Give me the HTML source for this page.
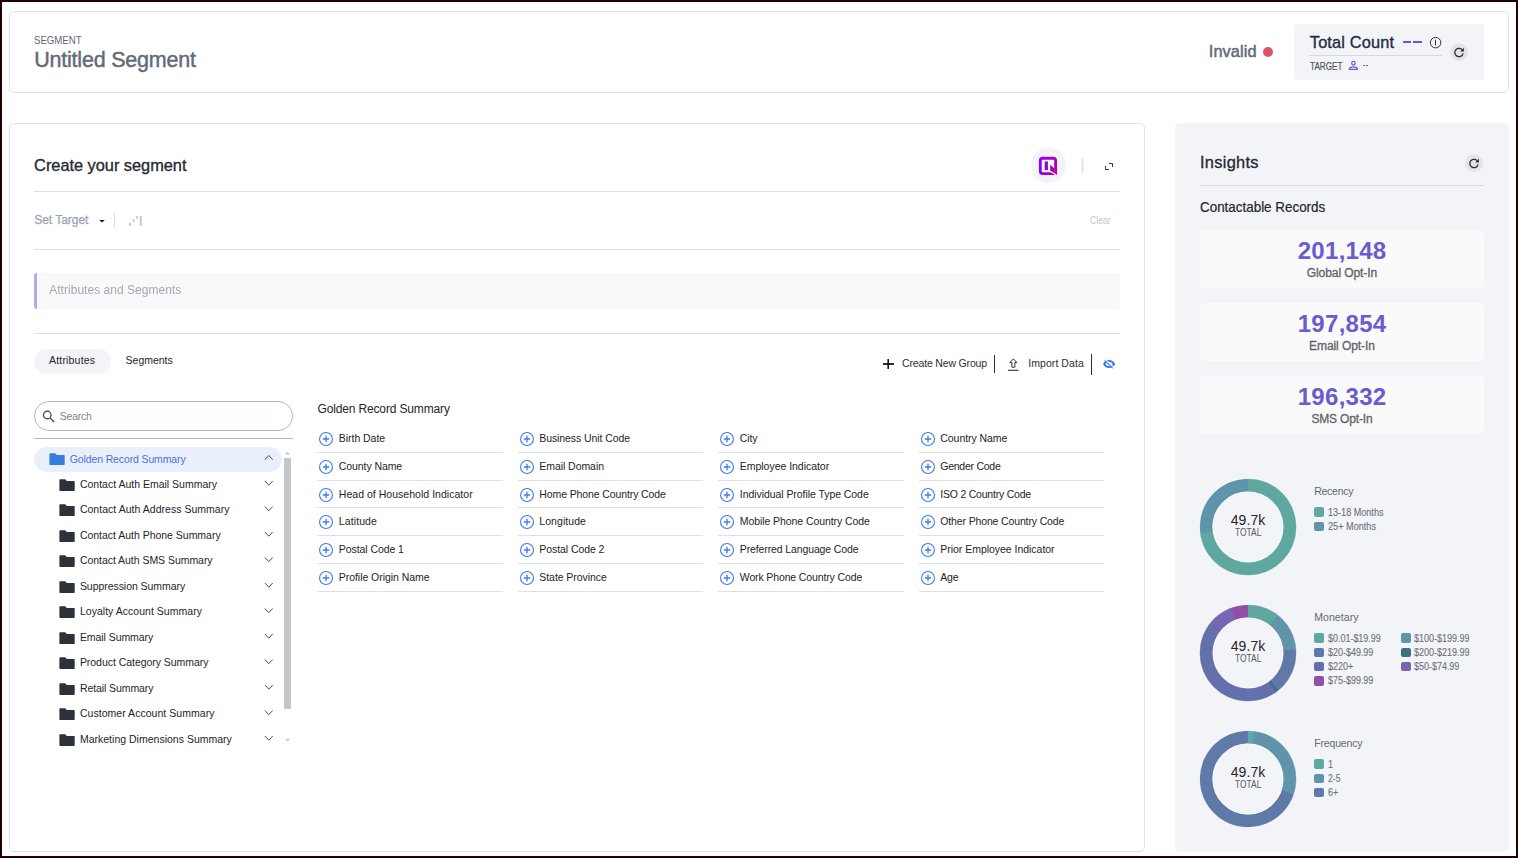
<!DOCTYPE html>
<html lang="en">
<head>
<meta charset="utf-8">
<title>Untitled Segment</title>
<style>
*{box-sizing:content-box;margin:0;padding:0}
html,body{width:1518px;height:858px;overflow:hidden;background:#fff}
body{font-family:"Liberation Sans",sans-serif;font-size:12px;color:#1f2329;-webkit-font-smoothing:antialiased}
.frame{position:absolute;left:0;top:0;width:1514px;height:854px;border:2px solid #220000;background:#fff;overflow:hidden}
.card{position:absolute;border:1px solid #dfe3e9;border-radius:5px;background:#fff}
.ins{position:absolute;border-radius:5px;background:#f3f4f8}
.t{position:absolute;display:block;white-space:nowrap;font-weight:400;font-style:normal;z-index:2;transform-origin:0 50%}
.ph{opacity:.999;will-change:opacity}
.ic{position:absolute;display:block;overflow:visible;z-index:2}
.ic svg{display:block}
.hr{position:absolute;height:1px;background:#dbdfe6}
.vr{position:absolute}
.dot{position:absolute;width:10px;height:10px;border-radius:50%;background:#dd5469}
.dash{position:absolute;background:#6a5ad6}
.count{position:absolute;border-radius:4px;background:#f3f4f8}
.logo{position:absolute;display:block;width:35px;height:35px}
.logo svg{display:block}
.drop{position:absolute;border-left:3px solid #b2a9ef;border-radius:3px;background:#f8f9fb}
.pill{position:absolute;border-radius:13px;background:#f3f4f8}
.pill.sel{background:#e9f0fc}
.search{position:absolute;border:1px solid #b1b8c0;border-radius:15px;background:#fff}
.stat{position:absolute;border-radius:5px;background:#fafafb}
.donut{position:absolute;display:block}
.sw{position:absolute;width:10px;height:9.6px;border-radius:2px}
</style>
</head>
<body>
<div class="frame">
<header class="card top" style="left:7px;top:9px;width:1498px;height:80px">
<span class="t eyebrow" style="left:24.2px;top:22px;font-size:10.8px;line-height:13px;color:#5f6877;transform:scaleX(0.892);">SEGMENT</span>
<h1 class="t" style="left:24.2px;top:36px;font-size:21.5px;line-height:25px;color:#636b78;letter-spacing:-0.21px;-webkit-text-stroke:0.43px currentColor;">Untitled Segment</h1>
<span class="t" style="left:1198.8px;top:29px;font-size:16.38px;line-height:20px;color:#636b78;letter-spacing:0.07px;-webkit-text-stroke:0.5px currentColor;">Invalid</span>
<i class="dot" style="left:1253px;top:35px"></i>
<div class="count" style="left:1284px;top:12px;width:190px;height:56px">
<h3 class="t" style="left:15.8px;top:8px;font-size:16.38px;line-height:20px;color:#222c3e;letter-spacing:0.15px;-webkit-text-stroke:0.33px currentColor;">Total Count</h3>
<span class="t" style="left:16px;top:38px;font-size:10px;line-height:10px;color:#50555d;transform:scaleX(0.816);-webkit-text-stroke:0.2px currentColor;">TARGET</span>
<i class="dash" style="left:108.9px;top:16.6px;width:8.6px;height:2.2px"></i><i class="dash" style="left:119.4px;top:16.6px;width:8.6px;height:2.2px"></i>
<svg class="ic" style="left:135px;top:12px" width="13" height="13" viewBox="-0.5 -0.65 13 13" fill="none" stroke="#2c3038"><circle cx="6.100" cy="6" r="5.250" stroke-width="1" fill="#f8f9fb"/><path d="M6 3v5.800" stroke-width="1"/></svg>
<i class="hr" style="left:15px;top:31px;width:133px;background:#d6d9df"></i>
<svg class="ic" style="left:54px;top:36px" width="11" height="11" viewBox="-0.3 -0.3 11 11" fill="none" stroke="#6f5cd8" stroke-width="1.25"><circle cx="5.1" cy="2.85" r="1.75"/><path d="M1 9.100c0-1.900 2.200-2.500 4.100-2.500s4.100.600 4.100 2.500z" stroke-linejoin="round"/></svg>
<i class="dash" style="left:69.1px;top:41px;width:2.2px;height:1.1px"></i><i class="dash" style="left:71.9px;top:41px;width:2.2px;height:1.1px"></i>
<span class="ic" style="left:156px;top:19px"><svg width="18" height="18" viewBox="0 0 18 18"><circle cx="9" cy="9" r="8.950" fill="#e2e4e8"/><path d="M12.700 7.500A4.200 4.200 0 1 0 13.100 10.400" fill="none" stroke="#2c3038" stroke-width="1.300"/><path d="M13.900 4.700v3.700H10.200z" fill="#2c3038"/></svg></span>
</div>
</header>
<main class="card main" style="left:7px;top:121px;width:1134px;height:727px">
<h3 class="t" style="left:24.1px;top:31px;font-size:16.38px;line-height:20px;color:#252a33;letter-spacing:-0.02px;-webkit-text-stroke:0.33px currentColor;">Create your segment</h3>
<span class="t" style="left:24.2px;top:89px;font-size:12px;line-height:14px;color:#9aa4b2;letter-spacing:-0.03px;-webkit-text-stroke:0.25px currentColor;">Set Target</span>
<span class="t" style="left:1080.3px;top:92px;font-size:10px;line-height:10px;color:#c3c6cb;transform:scaleX(0.862);">Clear</span>
<span class="t ph" style="left:39.2px;top:159px;font-size:12px;line-height:14px;color:#a6a9ae;letter-spacing:0.03px;">Attributes and Segments</span>
<span class="t" style="left:39.1px;top:230px;font-size:10.5px;line-height:13px;color:#1f2329;letter-spacing:0.17px;">Attributes</span>
<span class="t" style="left:115.6px;top:230px;font-size:10.5px;line-height:13px;color:#1f2329;letter-spacing:-0.02px;">Segments</span>
<span class="t" style="left:892.1px;top:233px;font-size:10.5px;line-height:13px;color:#2b2f36;letter-spacing:-0.17px;">Create New Group</span>
<span class="t" style="left:1018.2px;top:233px;font-size:10.5px;line-height:13px;color:#2b2f36;letter-spacing:0.07px;">Import Data</span>
<span class="t" style="left:49.7px;top:286px;font-size:10.5px;line-height:13px;color:#80858c;letter-spacing:-0.2px;">Search</span>
<span class="t" style="left:59.8px;top:329px;font-size:10.5px;line-height:13px;color:#4a70dc;letter-spacing:-0.13px;">Golden Record Summary</span>
<span class="t" style="left:69.9px;top:354px;font-size:10.5px;line-height:13px;color:#1f2329;">Contact Auth Email Summary</span>
<span class="t" style="left:69.9px;top:379px;font-size:10.5px;line-height:13px;color:#1f2329;letter-spacing:0.03px;">Contact Auth Address Summary</span>
<span class="t" style="left:69.9px;top:405px;font-size:10.5px;line-height:13px;color:#1f2329;letter-spacing:-0.02px;">Contact Auth Phone Summary</span>
<span class="t" style="left:69.9px;top:430px;font-size:10.5px;line-height:13px;color:#1f2329;letter-spacing:-0.04px;">Contact Auth SMS Summary</span>
<span class="t" style="left:69.9px;top:456px;font-size:10.5px;line-height:13px;color:#1f2329;letter-spacing:-0.05px;">Suppression Summary</span>
<span class="t" style="left:69.9px;top:481px;font-size:10.5px;line-height:13px;color:#1f2329;letter-spacing:0.03px;">Loyalty Account Summary</span>
<span class="t" style="left:69.9px;top:507px;font-size:10.5px;line-height:13px;color:#1f2329;letter-spacing:-0.06px;">Email Summary</span>
<span class="t" style="left:69.9px;top:532px;font-size:10.5px;line-height:13px;color:#1f2329;letter-spacing:-0.04px;">Product Category Summary</span>
<span class="t" style="left:69.9px;top:558px;font-size:10.5px;line-height:13px;color:#1f2329;letter-spacing:-0.08px;">Retail Summary</span>
<span class="t" style="left:69.9px;top:583px;font-size:10.5px;line-height:13px;color:#1f2329;letter-spacing:0.04px;">Customer Account Summary</span>
<span class="t" style="left:69.9px;top:609px;font-size:10.5px;line-height:13px;color:#1f2329;letter-spacing:0.01px;">Marketing Dimensions Summary</span>
<h4 class="t" style="left:307.5px;top:278px;font-size:12px;line-height:14px;color:#1f2329;letter-spacing:-0.15px;">Golden Record Summary</h4>
<span class="t" style="left:328.8px;top:308px;font-size:10.5px;line-height:13px;color:#1f2329;letter-spacing:-0.04px;">Birth Date</span>
<span class="t" style="left:529.3px;top:308px;font-size:10.5px;line-height:13px;color:#1f2329;letter-spacing:-0.09px;">Business Unit Code</span>
<span class="t" style="left:729.8px;top:308px;font-size:10.5px;line-height:13px;color:#1f2329;letter-spacing:-0.1px;">City</span>
<span class="t" style="left:930.3px;top:308px;font-size:10.5px;line-height:13px;color:#1f2329;letter-spacing:-0.06px;">Country Name</span>
<span class="t" style="left:328.8px;top:336px;font-size:10.5px;line-height:13px;color:#1f2329;letter-spacing:-0.08px;">County Name</span>
<span class="t" style="left:529.3px;top:336px;font-size:10.5px;line-height:13px;color:#1f2329;letter-spacing:-0.06px;">Email Domain</span>
<span class="t" style="left:729.8px;top:336px;font-size:10.5px;line-height:13px;color:#1f2329;letter-spacing:-0.03px;">Employee Indicator</span>
<span class="t" style="left:930.3px;top:336px;font-size:10.5px;line-height:13px;color:#1f2329;letter-spacing:-0.26px;">Gender Code</span>
<span class="t" style="left:328.8px;top:364px;font-size:10.5px;line-height:13px;color:#1f2329;letter-spacing:0.03px;">Head of Household Indicator</span>
<span class="t" style="left:529.3px;top:364px;font-size:10.5px;line-height:13px;color:#1f2329;letter-spacing:-0.11px;">Home Phone Country Code</span>
<span class="t" style="left:729.8px;top:364px;font-size:10.5px;line-height:13px;color:#1f2329;letter-spacing:-0.06px;">Individual Profile Type Code</span>
<span class="t" style="left:930.3px;top:364px;font-size:10.5px;line-height:13px;color:#1f2329;letter-spacing:-0.22px;">ISO 2 Country Code</span>
<span class="t" style="left:328.8px;top:391px;font-size:10.5px;line-height:13px;color:#1f2329;letter-spacing:0.1px;">Latitude</span>
<span class="t" style="left:529.3px;top:391px;font-size:10.5px;line-height:13px;color:#1f2329;letter-spacing:0.06px;">Longitude</span>
<span class="t" style="left:729.8px;top:391px;font-size:10.5px;line-height:13px;color:#1f2329;letter-spacing:-0.08px;">Mobile Phone Country Code</span>
<span class="t" style="left:930.3px;top:391px;font-size:10.5px;line-height:13px;color:#1f2329;letter-spacing:-0.14px;">Other Phone Country Code</span>
<span class="t" style="left:328.8px;top:419px;font-size:10.5px;line-height:13px;color:#1f2329;letter-spacing:-0.07px;">Postal Code 1</span>
<span class="t" style="left:529.3px;top:419px;font-size:10.5px;line-height:13px;color:#1f2329;letter-spacing:-0.07px;">Postal Code 2</span>
<span class="t" style="left:729.8px;top:419px;font-size:10.5px;line-height:13px;color:#1f2329;letter-spacing:-0.12px;">Preferred Language Code</span>
<span class="t" style="left:930.3px;top:419px;font-size:10.5px;line-height:13px;color:#1f2329;letter-spacing:-0.03px;">Prior Employee Indicator</span>
<span class="t" style="left:328.8px;top:447px;font-size:10.5px;line-height:13px;color:#1f2329;letter-spacing:-0.05px;">Profile Origin Name</span>
<span class="t" style="left:529.3px;top:447px;font-size:10.5px;line-height:13px;color:#1f2329;letter-spacing:-0.06px;">State Province</span>
<span class="t" style="left:729.8px;top:447px;font-size:10.5px;line-height:13px;color:#1f2329;letter-spacing:-0.13px;">Work Phone Country Code</span>
<span class="t" style="left:930.3px;top:447px;font-size:10.5px;line-height:13px;color:#1f2329;letter-spacing:-0.18px;">Age</span>
<span class="logo" style="left:1021px;top:24px"><svg width="35" height="35" viewBox="0 0 35 35"><defs><linearGradient id="lg" gradientUnits="userSpaceOnUse" x1="0" y1="0" x2="18.2" y2="0"><stop offset="0" stop-color="#8800ff"/><stop offset="1" stop-color="#b800a8"/></linearGradient></defs><circle cx="17.5" cy="17.5" r="17.5" fill="#f3f4f8"/><g transform="translate(7.86 8.83)"><path d="M4 0h10.2a4 4 0 0 1 4 4v14.2H4a4 4 0 0 1-4-4V4a4 4 0 0 1 4-4z" fill="url(#lg)"/><rect x="2.9" y="3" width="12.4" height="12.4" rx="0.8" fill="#fff"/><rect x="5.8" y="4.6" width="3.3" height="8.6" fill="url(#lg)"/><path d="M11.3 7.900L15.4 11.300V16.700L11.3 14.100z" fill="url(#lg)"/><path d="M11.300 14.400L17.500 18.100" stroke="#fff" stroke-width="1.100"/></g></svg></span>
<i class="vr" style="left:1071.2px;top:34px;width:2.6px;height:15px;background:#ebecf0;border-radius:1.3px"></i>
<svg class="ic" style="left:1095px;top:39px" width="8" height="7" viewBox="0 0 8 7" fill="none" stroke="#30343b" stroke-width="1"><path d="M4 0.500H7.500V4M0.500 3V6.500H4"/></svg>
<i class="hr" style="left:24px;top:67px;width:1086px"></i>
<svg class="ic" style="left:89px;top:96px" width="6" height="3" viewBox="0 0 6 3"><path d="M0.200 0h5.600L3 2.500z" fill="#15171a"/></svg>
<i class="vr" style="left:104px;top:89px;width:1px;height:15px;background:#dadde3"></i>
<svg class="ic" style="left:118px;top:91px" width="15" height="12" viewBox="0 0 15 12" fill="#c0c5d0"><rect x="1" y="7.800" width="1.700" height="3.200"/><rect x="4.800" y="4.100" width="1.600" height="3.100"/><rect x="8.200" y="1" width="1.700" height="2.900"/><rect x="11.800" y="1" width="1.900" height="10"/></svg>
<i class="hr" style="left:24px;top:125px;width:1086px"></i>
<div class="drop" style="left:24px;top:149px;width:1083px;height:36px"></div>
<i class="hr" style="left:24px;top:209px;width:1086px"></i>
<i class="pill" style="left:24px;top:225px;width:77px;height:25px"></i>
<svg class="ic" style="left:873px;top:235px" width="11" height="10" viewBox="0 0 11 10" fill="#15171a"><rect x="0" y="4.100" width="11" height="1.800"/><rect x="4.400" y="0" width="1.600" height="10"/></svg>
<i class="vr" style="left:984px;top:231px;width:1px;height:18px;background:#2b2e33"></i>
<svg class="ic" style="left:997px;top:234px" width="12" height="13" viewBox="-0.7 0 12 13" fill="none" stroke="#2c3038" stroke-width="1"><path d="M5.700 0.900L2.200 4.500h2v4.700h3V4.500h2z" stroke-linejoin="round"/><path d="M0.300 12.300h10.400" stroke-width="1.100"/></svg>
<i class="vr" style="left:1081px;top:230px;width:1px;height:21px;background:#2b2e33"></i>
<svg class="ic" style="left:1093px;top:235px" width="12" height="10" viewBox="0 0 12 10" fill="none" stroke="#2f74ea"><path d="M1.100 5C2.400 2.800 4 1.900 6.100 1.900s3.700.9 5 3.100C9.800 7.200 8.200 8.100 6.100 8.100S2.400 7.200 1.100 5z" stroke-width="1.800"/><circle cx="6.100" cy="5" r="1" fill="#2f74ea" stroke="none"/><path d="M2.300 0.300l8.600 8.300" stroke="#fff" stroke-width="1.100"/><path d="M1.300 1l8.700 8.400" stroke-width="1"/></svg>
<div class="search" style="left:24px;top:277px;width:257px;height:28px"></div>
<svg class="ic" style="left:32px;top:286px" width="13" height="14" viewBox="0 -0.1 13 14" fill="none" stroke="#3a3e45" stroke-width="1.2"><circle cx="5.2" cy="4.9" r="3.8"/><path d="M8 7.800l4.100 4.100"/></svg>
<i class="hr" style="left:24px;top:314px;width:259px;background:#b4b9c0"></i>
<i class="pill sel" style="left:24px;top:323px;width:248px;height:25px"></i>
<svg class="ic" style="left:39px;top:329px" width="16" height="12" viewBox="-0.4 0 16 12" fill="#3b7ce0"><path d="M0.6 0.2h5.2l1.6 1.700h7.200c.4 0 .7.300.7.700v8.700c0 .4-.3.700-.7.700H0.700c-.4 0-.7-.3-.7-.7V.900C0 .500.300.200.600.200z"/></svg><svg class="ic" style="left:254px;top:330px" width="10" height="7" viewBox="-0.4 -0.5 10 7" fill="none" stroke="#4a4e55" stroke-width="1"><path d="M0.5 5.2L4.4 1l3.9 4.2"/></svg>
<svg class="ic" style="left:49px;top:355px" width="16" height="12" viewBox="-0.4 0 16 12" fill="#2d3138"><path d="M0.6 0.2h5.2l1.6 1.700h7.200c.4 0 .7.300.7.700v8.700c0 .4-.3.700-.7.700H0.700c-.4 0-.7-.3-.7-.7V.900C0 .500.300.200.600.200z"/></svg><svg class="ic" style="left:254px;top:356px" width="10" height="7" viewBox="-0.4 -0.2 10 7" fill="none" stroke="#4a4e55" stroke-width="1"><path d="M0.5 0.8L4.4 5l3.9-4.2"/></svg><svg class="ic" style="left:49px;top:380px" width="16" height="12" viewBox="-0.4 0 16 12" fill="#2d3138"><path d="M0.6 0.2h5.2l1.6 1.700h7.200c.4 0 .7.300.7.700v8.700c0 .4-.3.700-.7.700H0.700c-.4 0-.7-.3-.7-.7V.900C0 .500.300.200.600.200z"/></svg><svg class="ic" style="left:254px;top:381px" width="10" height="7" viewBox="-0.4 -0.7 10 7" fill="none" stroke="#4a4e55" stroke-width="1"><path d="M0.5 0.8L4.4 5l3.9-4.2"/></svg><svg class="ic" style="left:49px;top:406px" width="16" height="12" viewBox="-0.4 0 16 12" fill="#2d3138"><path d="M0.6 0.2h5.2l1.6 1.700h7.200c.4 0 .7.300.7.700v8.700c0 .4-.3.700-.7.700H0.700c-.4 0-.7-.3-.7-.7V.900C0 .500.300.200.600.200z"/></svg><svg class="ic" style="left:254px;top:407px" width="10" height="7" viewBox="-0.4 -0.2 10 7" fill="none" stroke="#4a4e55" stroke-width="1"><path d="M0.5 0.8L4.4 5l3.9-4.2"/></svg><svg class="ic" style="left:49px;top:431px" width="16" height="12" viewBox="-0.4 0 16 12" fill="#2d3138"><path d="M0.6 0.2h5.2l1.6 1.700h7.200c.4 0 .7.300.7.700v8.700c0 .4-.3.700-.7.700H0.700c-.4 0-.7-.3-.7-.7V.900C0 .500.300.200.600.200z"/></svg><svg class="ic" style="left:254px;top:432px" width="10" height="7" viewBox="-0.4 -0.7 10 7" fill="none" stroke="#4a4e55" stroke-width="1"><path d="M0.5 0.8L4.4 5l3.9-4.2"/></svg><svg class="ic" style="left:49px;top:457px" width="16" height="12" viewBox="-0.4 0 16 12" fill="#2d3138"><path d="M0.6 0.2h5.2l1.6 1.700h7.200c.4 0 .7.300.7.700v8.700c0 .4-.3.700-.7.700H0.700c-.4 0-.7-.3-.7-.7V.900C0 .500.300.200.600.200z"/></svg><svg class="ic" style="left:254px;top:458px" width="10" height="7" viewBox="-0.4 -0.2 10 7" fill="none" stroke="#4a4e55" stroke-width="1"><path d="M0.5 0.8L4.4 5l3.9-4.2"/></svg><svg class="ic" style="left:49px;top:482px" width="16" height="12" viewBox="-0.4 0 16 12" fill="#2d3138"><path d="M0.6 0.2h5.2l1.6 1.700h7.200c.4 0 .7.300.7.700v8.700c0 .4-.3.700-.7.700H0.700c-.4 0-.7-.3-.7-.7V.900C0 .500.300.200.600.200z"/></svg><svg class="ic" style="left:254px;top:483px" width="10" height="7" viewBox="-0.4 -0.7 10 7" fill="none" stroke="#4a4e55" stroke-width="1"><path d="M0.5 0.8L4.4 5l3.9-4.2"/></svg><svg class="ic" style="left:49px;top:508px" width="16" height="12" viewBox="-0.4 0 16 12" fill="#2d3138"><path d="M0.6 0.2h5.2l1.6 1.700h7.200c.4 0 .7.300.7.700v8.700c0 .4-.3.700-.7.700H0.700c-.4 0-.7-.3-.7-.7V.900C0 .500.300.200.600.200z"/></svg><svg class="ic" style="left:254px;top:509px" width="10" height="7" viewBox="-0.4 -0.2 10 7" fill="none" stroke="#4a4e55" stroke-width="1"><path d="M0.5 0.8L4.4 5l3.9-4.2"/></svg><svg class="ic" style="left:49px;top:533px" width="16" height="12" viewBox="-0.4 0 16 12" fill="#2d3138"><path d="M0.6 0.2h5.2l1.6 1.700h7.200c.4 0 .7.300.7.700v8.700c0 .4-.3.700-.7.700H0.700c-.4 0-.7-.3-.7-.7V.900C0 .500.300.200.600.200z"/></svg><svg class="ic" style="left:254px;top:534px" width="10" height="7" viewBox="-0.4 -0.7 10 7" fill="none" stroke="#4a4e55" stroke-width="1"><path d="M0.5 0.8L4.4 5l3.9-4.2"/></svg><svg class="ic" style="left:49px;top:559px" width="16" height="12" viewBox="-0.4 0 16 12" fill="#2d3138"><path d="M0.6 0.2h5.2l1.6 1.700h7.200c.4 0 .7.300.7.700v8.700c0 .4-.3.700-.7.700H0.700c-.4 0-.7-.3-.7-.7V.900C0 .500.300.200.600.200z"/></svg><svg class="ic" style="left:254px;top:560px" width="10" height="7" viewBox="-0.4 -0.2 10 7" fill="none" stroke="#4a4e55" stroke-width="1"><path d="M0.5 0.8L4.4 5l3.9-4.2"/></svg><svg class="ic" style="left:49px;top:584px" width="16" height="12" viewBox="-0.4 0 16 12" fill="#2d3138"><path d="M0.6 0.2h5.2l1.6 1.700h7.200c.4 0 .7.300.7.700v8.700c0 .4-.3.700-.7.700H0.700c-.4 0-.7-.3-.7-.7V.900C0 .500.300.200.600.200z"/></svg><svg class="ic" style="left:254px;top:585px" width="10" height="7" viewBox="-0.4 -0.7 10 7" fill="none" stroke="#4a4e55" stroke-width="1"><path d="M0.5 0.8L4.4 5l3.9-4.2"/></svg><svg class="ic" style="left:49px;top:610px" width="16" height="12" viewBox="-0.4 0 16 12" fill="#2d3138"><path d="M0.6 0.2h5.2l1.6 1.700h7.200c.4 0 .7.300.7.700v8.700c0 .4-.3.700-.7.700H0.700c-.4 0-.7-.3-.7-.7V.900C0 .500.300.200.600.200z"/></svg><svg class="ic" style="left:254px;top:611px" width="10" height="7" viewBox="-0.4 -0.2 10 7" fill="none" stroke="#4a4e55" stroke-width="1"><path d="M0.5 0.8L4.4 5l3.9-4.2"/></svg>
<svg class="ic" style="left:275px;top:327px" width="6" height="4" viewBox="0 0 6 4"><path d="M0 3.500h5L2.500 0.800z" fill="#c4c9cf"/></svg>
<i class="vr" style="left:274px;top:334px;width:7px;height:251px;background:#c1c7cd"></i>
<svg class="ic" style="left:275px;top:614px" width="6" height="4" viewBox="0 0 6 4"><path d="M0 0.800h5L2.500 3.500z" fill="#c4c9cf"/></svg>
<svg class="ic" style="left:309px;top:308px" width="14" height="14" viewBox="0 0 14 14" fill="none" stroke="#3f7be6" stroke-width="1.1"><circle cx="7" cy="7" r="6.450"/><path d="M7 3.800v6.400M3.800 7h6.400" stroke-width="1.350"/></svg><i class="hr" style="left:307.3px;top:328px;width:185.7px;background:#dcdfe3"></i><svg class="ic" style="left:510px;top:308px" width="14" height="14" viewBox="0 0 14 14" fill="none" stroke="#3f7be6" stroke-width="1.1"><circle cx="7" cy="7" r="6.450"/><path d="M7 3.800v6.400M3.800 7h6.400" stroke-width="1.350"/></svg><i class="hr" style="left:507.8px;top:328px;width:185.7px;background:#dcdfe3"></i><svg class="ic" style="left:710px;top:308px" width="14" height="14" viewBox="0 0 14 14" fill="none" stroke="#3f7be6" stroke-width="1.1"><circle cx="7" cy="7" r="6.450"/><path d="M7 3.800v6.400M3.800 7h6.400" stroke-width="1.350"/></svg><i class="hr" style="left:708.3px;top:328px;width:185.7px;background:#dcdfe3"></i><svg class="ic" style="left:911px;top:308px" width="14" height="14" viewBox="0 0 14 14" fill="none" stroke="#3f7be6" stroke-width="1.1"><circle cx="7" cy="7" r="6.450"/><path d="M7 3.800v6.400M3.800 7h6.400" stroke-width="1.350"/></svg><i class="hr" style="left:908.8px;top:328px;width:185.7px;background:#dcdfe3"></i><svg class="ic" style="left:309px;top:336px" width="14" height="14" viewBox="0 0 14 14" fill="none" stroke="#3f7be6" stroke-width="1.1"><circle cx="7" cy="7" r="6.450"/><path d="M7 3.800v6.400M3.800 7h6.400" stroke-width="1.350"/></svg><i class="hr" style="left:307.3px;top:356px;width:185.7px;background:#dcdfe3"></i><svg class="ic" style="left:510px;top:336px" width="14" height="14" viewBox="0 0 14 14" fill="none" stroke="#3f7be6" stroke-width="1.1"><circle cx="7" cy="7" r="6.450"/><path d="M7 3.800v6.400M3.800 7h6.400" stroke-width="1.350"/></svg><i class="hr" style="left:507.8px;top:356px;width:185.7px;background:#dcdfe3"></i><svg class="ic" style="left:710px;top:336px" width="14" height="14" viewBox="0 0 14 14" fill="none" stroke="#3f7be6" stroke-width="1.1"><circle cx="7" cy="7" r="6.450"/><path d="M7 3.800v6.400M3.800 7h6.400" stroke-width="1.350"/></svg><i class="hr" style="left:708.3px;top:356px;width:185.7px;background:#dcdfe3"></i><svg class="ic" style="left:911px;top:336px" width="14" height="14" viewBox="0 0 14 14" fill="none" stroke="#3f7be6" stroke-width="1.1"><circle cx="7" cy="7" r="6.450"/><path d="M7 3.800v6.400M3.800 7h6.400" stroke-width="1.350"/></svg><i class="hr" style="left:908.8px;top:356px;width:185.7px;background:#dcdfe3"></i><svg class="ic" style="left:309px;top:364px" width="14" height="14" viewBox="0 0 14 14" fill="none" stroke="#3f7be6" stroke-width="1.1"><circle cx="7" cy="7" r="6.450"/><path d="M7 3.800v6.400M3.800 7h6.400" stroke-width="1.350"/></svg><i class="hr" style="left:307.3px;top:383px;width:185.7px;background:#dcdfe3"></i><svg class="ic" style="left:510px;top:364px" width="14" height="14" viewBox="0 0 14 14" fill="none" stroke="#3f7be6" stroke-width="1.1"><circle cx="7" cy="7" r="6.450"/><path d="M7 3.800v6.400M3.800 7h6.400" stroke-width="1.350"/></svg><i class="hr" style="left:507.8px;top:383px;width:185.7px;background:#dcdfe3"></i><svg class="ic" style="left:710px;top:364px" width="14" height="14" viewBox="0 0 14 14" fill="none" stroke="#3f7be6" stroke-width="1.1"><circle cx="7" cy="7" r="6.450"/><path d="M7 3.800v6.400M3.800 7h6.400" stroke-width="1.350"/></svg><i class="hr" style="left:708.3px;top:383px;width:185.7px;background:#dcdfe3"></i><svg class="ic" style="left:911px;top:364px" width="14" height="14" viewBox="0 0 14 14" fill="none" stroke="#3f7be6" stroke-width="1.1"><circle cx="7" cy="7" r="6.450"/><path d="M7 3.800v6.400M3.800 7h6.400" stroke-width="1.350"/></svg><i class="hr" style="left:908.8px;top:383px;width:185.7px;background:#dcdfe3"></i><svg class="ic" style="left:309px;top:391px" width="14" height="14" viewBox="0 0 14 14" fill="none" stroke="#3f7be6" stroke-width="1.1"><circle cx="7" cy="7" r="6.450"/><path d="M7 3.800v6.400M3.800 7h6.400" stroke-width="1.350"/></svg><i class="hr" style="left:307.3px;top:411px;width:185.7px;background:#dcdfe3"></i><svg class="ic" style="left:510px;top:391px" width="14" height="14" viewBox="0 0 14 14" fill="none" stroke="#3f7be6" stroke-width="1.1"><circle cx="7" cy="7" r="6.450"/><path d="M7 3.800v6.400M3.800 7h6.400" stroke-width="1.350"/></svg><i class="hr" style="left:507.8px;top:411px;width:185.7px;background:#dcdfe3"></i><svg class="ic" style="left:710px;top:391px" width="14" height="14" viewBox="0 0 14 14" fill="none" stroke="#3f7be6" stroke-width="1.1"><circle cx="7" cy="7" r="6.450"/><path d="M7 3.800v6.400M3.800 7h6.400" stroke-width="1.350"/></svg><i class="hr" style="left:708.3px;top:411px;width:185.7px;background:#dcdfe3"></i><svg class="ic" style="left:911px;top:391px" width="14" height="14" viewBox="0 0 14 14" fill="none" stroke="#3f7be6" stroke-width="1.1"><circle cx="7" cy="7" r="6.450"/><path d="M7 3.800v6.400M3.800 7h6.400" stroke-width="1.350"/></svg><i class="hr" style="left:908.8px;top:411px;width:185.7px;background:#dcdfe3"></i><svg class="ic" style="left:309px;top:419px" width="14" height="14" viewBox="0 0 14 14" fill="none" stroke="#3f7be6" stroke-width="1.1"><circle cx="7" cy="7" r="6.450"/><path d="M7 3.800v6.400M3.800 7h6.400" stroke-width="1.350"/></svg><i class="hr" style="left:307.3px;top:439px;width:185.7px;background:#dcdfe3"></i><svg class="ic" style="left:510px;top:419px" width="14" height="14" viewBox="0 0 14 14" fill="none" stroke="#3f7be6" stroke-width="1.1"><circle cx="7" cy="7" r="6.450"/><path d="M7 3.800v6.400M3.800 7h6.400" stroke-width="1.350"/></svg><i class="hr" style="left:507.8px;top:439px;width:185.7px;background:#dcdfe3"></i><svg class="ic" style="left:710px;top:419px" width="14" height="14" viewBox="0 0 14 14" fill="none" stroke="#3f7be6" stroke-width="1.1"><circle cx="7" cy="7" r="6.450"/><path d="M7 3.800v6.400M3.800 7h6.400" stroke-width="1.350"/></svg><i class="hr" style="left:708.3px;top:439px;width:185.7px;background:#dcdfe3"></i><svg class="ic" style="left:911px;top:419px" width="14" height="14" viewBox="0 0 14 14" fill="none" stroke="#3f7be6" stroke-width="1.1"><circle cx="7" cy="7" r="6.450"/><path d="M7 3.800v6.400M3.800 7h6.400" stroke-width="1.350"/></svg><i class="hr" style="left:908.8px;top:439px;width:185.7px;background:#dcdfe3"></i><svg class="ic" style="left:309px;top:447px" width="14" height="14" viewBox="0 0 14 14" fill="none" stroke="#3f7be6" stroke-width="1.1"><circle cx="7" cy="7" r="6.450"/><path d="M7 3.800v6.400M3.800 7h6.400" stroke-width="1.350"/></svg><i class="hr" style="left:307.3px;top:467px;width:185.7px;background:#dcdfe3"></i><svg class="ic" style="left:510px;top:447px" width="14" height="14" viewBox="0 0 14 14" fill="none" stroke="#3f7be6" stroke-width="1.1"><circle cx="7" cy="7" r="6.450"/><path d="M7 3.800v6.400M3.800 7h6.400" stroke-width="1.350"/></svg><i class="hr" style="left:507.8px;top:467px;width:185.7px;background:#dcdfe3"></i><svg class="ic" style="left:710px;top:447px" width="14" height="14" viewBox="0 0 14 14" fill="none" stroke="#3f7be6" stroke-width="1.1"><circle cx="7" cy="7" r="6.450"/><path d="M7 3.800v6.400M3.800 7h6.400" stroke-width="1.350"/></svg><i class="hr" style="left:708.3px;top:467px;width:185.7px;background:#dcdfe3"></i><svg class="ic" style="left:911px;top:447px" width="14" height="14" viewBox="0 0 14 14" fill="none" stroke="#3f7be6" stroke-width="1.1"><circle cx="7" cy="7" r="6.450"/><path d="M7 3.800v6.400M3.800 7h6.400" stroke-width="1.350"/></svg><i class="hr" style="left:908.8px;top:467px;width:185.7px;background:#dcdfe3"></i>
</main>
<aside class="ins" style="left:1173px;top:121px;width:334px;height:729px">
<div class="stat" style="left:25px;top:107px;width:284px;height:58px"></div><div class="stat" style="left:25px;top:180px;width:284px;height:58px"></div><div class="stat" style="left:25px;top:253px;width:284px;height:58px"></div>
<svg class="donut" style="left:23px;top:354px" width="100" height="100" viewBox="0 0 100 100"><circle cx="50" cy="50" r="41.9" fill="none" stroke="#5f94aa" stroke-width="12.8"/><path fill="#5fa8a0" d="M50.00 1.70A48.3 48.3 0 1 1 2.08 56.05L14.78 54.45A35.5 35.5 0 1 0 50.00 14.50Z"/><circle cx="50" cy="50" r="48.65" fill="none" stroke="#fff" stroke-opacity=".7" stroke-width="0.8"/><circle cx="50" cy="50" r="35.15" fill="none" stroke="#fff" stroke-opacity=".7" stroke-width="0.8"/></svg><i class="sw" style="left:139.2px;top:384.1px;background:#5fa8a0"></i><i class="sw" style="left:139.2px;top:398.6px;background:#5f94aa"></i><svg class="donut" style="left:23px;top:480px" width="100" height="100" viewBox="0 0 100 100"><circle cx="50" cy="50" r="41.9" fill="none" stroke="#9050aa" stroke-width="12.8"/><path fill="#5fa8a0" d="M50.00 1.70A48.3 48.3 0 0 1 80.53 12.57L72.44 22.49A35.5 35.5 0 0 0 50.00 14.50Z"/><path fill="#5f94aa" d="M80.13 12.25A48.3 48.3 0 0 1 98.20 46.97L85.43 47.77A35.5 35.5 0 0 0 72.15 22.26Z"/><path fill="#5f7aa8" d="M98.17 46.46A48.3 48.3 0 0 1 80.13 87.75L72.15 77.74A35.5 35.5 0 0 0 85.40 47.40Z"/><path fill="#3d7286" d="M80.53 87.43A48.3 48.3 0 0 1 77.63 89.61L70.31 79.12A35.5 35.5 0 0 0 72.44 77.51Z"/><path fill="#6370ab" d="M78.05 89.32A48.3 48.3 0 0 1 12.68 19.34L22.57 27.47A35.5 35.5 0 0 0 70.61 78.90Z"/><path fill="#7766b5" d="M12.36 19.74A48.3 48.3 0 0 1 33.08 4.76L37.57 16.75A35.5 35.5 0 0 0 22.33 27.76Z"/><circle cx="50" cy="50" r="48.65" fill="none" stroke="#fff" stroke-opacity=".7" stroke-width="0.8"/><circle cx="50" cy="50" r="35.15" fill="none" stroke="#fff" stroke-opacity=".7" stroke-width="0.8"/></svg><i class="sw" style="left:139.2px;top:510.1px;background:#5fa8a0"></i><i class="sw" style="left:139.2px;top:524.6px;background:#5f7aa8"></i><i class="sw" style="left:139.2px;top:538.9px;background:#6370ab"></i><i class="sw" style="left:139.2px;top:553px;background:#9050aa"></i><i class="sw" style="left:225.5px;top:510.1px;background:#5f94aa"></i><i class="sw" style="left:225.5px;top:524.6px;background:#3d7286"></i><i class="sw" style="left:225.5px;top:538.9px;background:#7766b5"></i><svg class="donut" style="left:23px;top:606px" width="100" height="100" viewBox="0 0 100 100"><circle cx="50" cy="50" r="41.9" fill="none" stroke="#5f7aa8" stroke-width="12.8"/><path fill="#5fa8a0" d="M50.00 1.70A48.3 48.3 0 0 1 57.22 2.24L55.31 14.90A35.5 35.5 0 0 0 50.00 14.50Z"/><path fill="#5f94aa" d="M56.72 2.17A48.3 48.3 0 0 1 95.86 65.17L83.70 61.15A35.5 35.5 0 0 0 54.94 14.85Z"/><circle cx="50" cy="50" r="48.65" fill="none" stroke="#fff" stroke-opacity=".7" stroke-width="0.8"/><circle cx="50" cy="50" r="35.15" fill="none" stroke="#fff" stroke-opacity=".7" stroke-width="0.8"/></svg><i class="sw" style="left:139.2px;top:636.1px;background:#5fa8a0"></i><i class="sw" style="left:139.2px;top:650.6px;background:#5f94aa"></i><i class="sw" style="left:139.2px;top:664.9px;background:#5f7aa8"></i>
<span class="ic" style="left:290px;top:31px"><svg width="18" height="18" viewBox="0 0 18 18"><circle cx="9" cy="9" r="8.950" fill="#e2e4e8"/><path d="M12.700 7.500A4.200 4.200 0 1 0 13.100 10.400" fill="none" stroke="#2c3038" stroke-width="1.300"/><path d="M13.900 4.700v3.700H10.200z" fill="#2c3038"/></svg></span>
<i class="hr" style="left:25px;top:62px;width:284px;background:#d6d9df"></i>
<h3 class="t" style="left:25px;top:29px;font-size:16.38px;line-height:20px;color:#252a33;letter-spacing:0.31px;-webkit-text-stroke:0.33px currentColor;">Insights</h3>
<h4 class="t" style="left:25px;top:76px;font-size:14.4px;line-height:16px;color:#22262d;transform:scaleX(0.932);-webkit-text-stroke:0.2px currentColor;">Contactable Records</h4>
<span class="t" style="left:122.73px;top:113px;font-size:24px;line-height:29px;color:#6a5bd0;letter-spacing:0.29px;font-weight:700;">201,148</span>
<span class="t" style="left:131.77px;top:143px;font-size:12px;line-height:14px;color:#606469;letter-spacing:-0.08px;-webkit-text-stroke:0.3px currentColor;">Global Opt-In</span>
<span class="t" style="left:122.73px;top:186px;font-size:24px;line-height:29px;color:#6a5bd0;letter-spacing:0.29px;font-weight:700;">197,854</span>
<span class="t" style="left:134.02px;top:216px;font-size:12px;line-height:14px;color:#606469;letter-spacing:-0.07px;-webkit-text-stroke:0.3px currentColor;">Email Opt-In</span>
<span class="t" style="left:122.73px;top:259px;font-size:24px;line-height:29px;color:#6a5bd0;letter-spacing:0.29px;font-weight:700;">196,332</span>
<span class="t" style="left:136.41px;top:289px;font-size:12px;line-height:14px;color:#606469;letter-spacing:-0.17px;-webkit-text-stroke:0.3px currentColor;">SMS Opt-In</span>
<span class="t" style="left:55.8px;top:389px;font-size:14px;line-height:17px;color:#22262d;letter-spacing:0.04px;">49.7k</span>
<span class="t" style="left:59.8px;top:405px;font-size:10px;line-height:10px;color:#555a63;transform:scaleX(0.843);">TOTAL</span>
<span class="t" style="left:139.2px;top:362px;font-size:10.5px;line-height:13px;color:#5f6877;letter-spacing:-0.25px;">Recency</span>
<span class="t" style="left:152.7px;top:384px;font-size:10px;line-height:11px;color:#6b7078;transform:scaleX(0.907);-webkit-text-stroke:0.1px currentColor;">13-18 Months</span>
<span class="t" style="left:152.7px;top:398px;font-size:10px;line-height:11px;color:#6b7078;transform:scaleX(0.913);-webkit-text-stroke:0.1px currentColor;">25+ Months</span>
<span class="t" style="left:55.8px;top:515px;font-size:14px;line-height:17px;color:#22262d;letter-spacing:0.04px;">49.7k</span>
<span class="t" style="left:59.8px;top:531px;font-size:10px;line-height:10px;color:#555a63;transform:scaleX(0.843);">TOTAL</span>
<span class="t" style="left:139.2px;top:488px;font-size:10.5px;line-height:13px;color:#5f6877;letter-spacing:0.07px;">Monetary</span>
<span class="t" style="left:152.7px;top:510px;font-size:10px;line-height:11px;color:#6b7078;transform:scaleX(0.895);-webkit-text-stroke:0.1px currentColor;">$0.01-$19.99</span>
<span class="t" style="left:152.7px;top:524px;font-size:10px;line-height:11px;color:#6b7078;transform:scaleX(0.896);-webkit-text-stroke:0.1px currentColor;">$20-$49.99</span>
<span class="t" style="left:152.7px;top:538px;font-size:10px;line-height:11px;color:#6b7078;transform:scaleX(0.902);-webkit-text-stroke:0.1px currentColor;">$220+</span>
<span class="t" style="left:152.7px;top:552px;font-size:10px;line-height:11px;color:#6b7078;transform:scaleX(0.896);-webkit-text-stroke:0.1px currentColor;">$75-$99.99</span>
<span class="t" style="left:239px;top:510px;font-size:10px;line-height:11px;color:#6b7078;transform:scaleX(0.898);-webkit-text-stroke:0.1px currentColor;">$100-$199.99</span>
<span class="t" style="left:239px;top:524px;font-size:10px;line-height:11px;color:#6b7078;transform:scaleX(0.898);-webkit-text-stroke:0.1px currentColor;">$200-$219.99</span>
<span class="t" style="left:239px;top:538px;font-size:10px;line-height:11px;color:#6b7078;transform:scaleX(0.896);-webkit-text-stroke:0.1px currentColor;">$50-$74.99</span>
<span class="t" style="left:55.8px;top:641px;font-size:14px;line-height:17px;color:#22262d;letter-spacing:0.04px;">49.7k</span>
<span class="t" style="left:59.8px;top:657px;font-size:10px;line-height:10px;color:#555a63;transform:scaleX(0.843);">TOTAL</span>
<span class="t" style="left:139.2px;top:614px;font-size:10.5px;line-height:13px;color:#5f6877;letter-spacing:-0.16px;">Frequency</span>
<span class="t" style="left:152.7px;top:636px;font-size:10px;line-height:11px;color:#6b7078;transform:scaleX(0.910);-webkit-text-stroke:0.1px currentColor;">1</span>
<span class="t" style="left:152.7px;top:650px;font-size:10px;line-height:11px;color:#6b7078;transform:scaleX(0.872);-webkit-text-stroke:0.1px currentColor;">2-5</span>
<span class="t" style="left:152.7px;top:664px;font-size:10px;line-height:11px;color:#6b7078;transform:scaleX(0.892);-webkit-text-stroke:0.1px currentColor;">6+</span>
</aside>
</div>
</body>
</html>
